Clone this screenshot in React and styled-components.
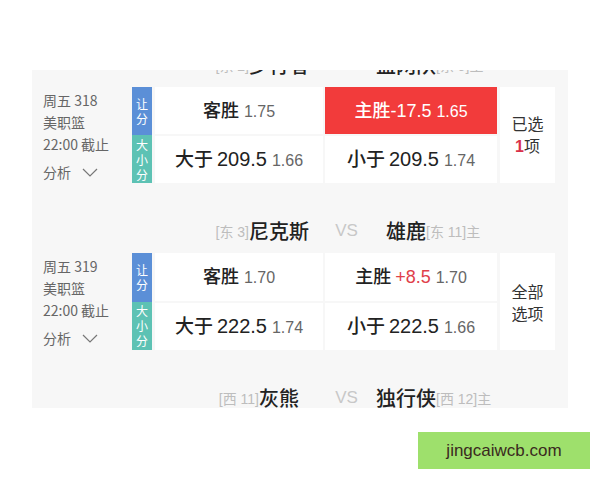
import React from "react";
import styled, { createGlobalStyle } from "styled-components";

const Global = createGlobalStyle`
  html, body { margin: 0; padding: 0; background: #fff; }
  body { font-family: "Liberation Sans", "Noto Sans CJK SC", sans-serif; }
`;

const Page = styled.div`
  width: 600px;
  height: 480px;
  padding-top: 70px;
  box-sizing: border-box;
  display: flex;
  flex-direction: column;
`;

const Panel = styled.div`
  margin-left: 32px;
  width: 536px;
  height: 338px;
  background: #f7f7f7;
  overflow: hidden;
`;

const Inner = styled.div`
  margin-top: -53px;
  display: flex;
  flex-direction: column;
`;

const Header = styled.div`
  height: 70px;
  box-sizing: border-box;
  padding-top: 26px;
  display: grid;
  grid-template-columns: 212px 70px 57px 70px 1fr;
  align-items: center;
  line-height: 22px;
`;

const Name = styled.div`
  grid-column: ${(p) => p.$col};
  justify-self: center;
  position: relative;
  white-space: nowrap;
  font-size: 20px;
  color: #222;
  font-weight: 500;
  font-family: "Noto Sans CJK SC", sans-serif;
`;

const Rank = styled.span`
  position: absolute;
  top: 1px;
  ${(p) => (p.$right ? "left: 100%;" : "right: 100%;")}
  font-size: 14px;
  font-weight: 400;
  color: #bdbdbd;
  font-family: "Liberation Sans", "Noto Sans CJK SC", sans-serif;
`;

const Vs = styled.div`
  grid-column: 3;
  padding-left: 8px;
  text-align: center;
  font-size: 17px;
  color: #c8c8c8;
  font-family: "Liberation Sans", sans-serif;
`;

const Card = styled.div`
  display: flex;
  padding-left: 11px;
  height: ${(p) => p.$h}px;
`;

const Info = styled.div`
  width: 89px;
  padding-top: 2px;
  display: flex;
  flex-direction: column;
  font-size: 14px;
  line-height: 22px;
  color: #666;
  font-family: "Noto Sans CJK SC", sans-serif;
`;

const Analyze = styled.div`
  margin-top: 6px;
  display: flex;
  align-items: center;
  gap: 11px;
`;

const Tags = styled.div`
  width: 20px;
  display: grid;
  grid-template-rows: 1fr 1fr;
`;

const Tag = styled.div`
  background: ${(p) => p.$color};
  color: #fff;
  font-size: 12px;
  line-height: 15px;
  display: flex;
  flex-direction: column;
  align-items: center;
  justify-content: center;
  font-family: "Noto Sans CJK SC", sans-serif;
`;

const Odds = styled.div`
  margin-left: 3px;
  width: 342px;
  display: grid;
  grid-template-columns: 168px 172px;
  grid-template-rows: 1fr 1fr;
  gap: 2px;
`;

const Cell = styled.div`
  background: ${(p) => (p.$active ? "#f23b3b" : "#fff")};
  color: ${(p) => (p.$active ? "#fff" : "#222")};
  display: flex;
  align-items: baseline;
  justify-content: center;
  padding-top: 11px;
  box-sizing: border-box;
  white-space: nowrap;
`;

const Label = styled.span`
  font-family: "Noto Sans CJK SC", sans-serif;
  font-size: ${(p) => (p.$big ? 19 : 18)}px;
  font-weight: 500;
  line-height: 22px;
`;

const Line = styled.span`
  font-size: ${(p) => (p.$big ? 20 : 18)}px;
  color: ${(p) => p.$color || "inherit"};
  margin-left: ${(p) => (p.$gap ? 4 : 0)}px;
`;

const Price = styled.span`
  font-size: 16px;
  margin-left: 5px;
  color: ${(p) => (p.$active ? "#fff" : "#666")};
`;

const Side2 = styled.div`
  margin-left: 3px;
  width: 55px;
  background: #fff;
  display: flex;
  flex-direction: column;
  align-items: center;
  justify-content: center;
  font-size: 16px;
  line-height: 22px;
  color: #333;
  font-family: "Noto Sans CJK SC", sans-serif;
`;

const Red = styled.span`
  color: #d9304a;
  font-family: "Liberation Sans", sans-serif;
  font-weight: bold;
`;

const Mark = styled.div`
  margin-top: 24px;
  margin-left: 418px;
  width: 172px;
  height: 37px;
  background: #9ee06c;
  display: flex;
  align-items: center;
  justify-content: center;
  font-size: 17px;
  color: #3a2a20;
  font-family: "Liberation Sans", sans-serif;
`;

const Chevron = () => (
  <svg width="16" height="9" viewBox="0 0 16 9">
    <polyline points="1,1 8,8 15,1" fill="none" stroke="#777" strokeWidth="1.2" />
  </svg>
);

function MatchHeader({ lr, l, r, rr }) {
  return (
    <Header>
      <Name $col={2}>
        <Rank>{lr}</Rank>
        {l}
      </Name>
      <Vs>VS</Vs>
      <Name $col={4}>
        {r}
        <Rank $right>{rr}</Rank>
      </Name>
    </Header>
  );
}

function MatchCard({ h, no, away, home, homeLine, homeColor, homeActive, total, over, under, side }) {
  return (
    <Card $h={h}>
      <Info>
        <div>周五 {no}</div>
        <div>美职篮</div>
        <div>22:00 截止</div>
        <Analyze>
          分析 <Chevron />
        </Analyze>
      </Info>
      <Tags>
        <Tag $color="#5b8fd7">
          <span>让</span>
          <span>分</span>
        </Tag>
        <Tag $color="#5dc2b4">
          <span>大</span>
          <span>小</span>
          <span>分</span>
        </Tag>
      </Tags>
      <Odds>
        <Cell>
          <Label>客胜</Label>
          <Price>{away}</Price>
        </Cell>
        <Cell $active={homeActive}>
          <Label>主胜</Label>
          <Line $color={homeColor} $gap={!homeActive}>{homeLine}</Line>
          <Price $active={homeActive}>{home}</Price>
        </Cell>
        <Cell $big>
          <Label $big>大于</Label>
          <Line $big $gap>{total}</Line>
          <Price>{over}</Price>
        </Cell>
        <Cell $big>
          <Label $big>小于</Label>
          <Line $big $gap>{total}</Line>
          <Price>{under}</Price>
        </Cell>
      </Odds>
      <Side2>{side}</Side2>
    </Card>
  );
}

export default function App() {
  return (
    <>
      <Global />
      <Page>
        <Panel>
          <Inner>
            <MatchHeader lr="[东 2]" l="步行者" r="篮网队" rr="[东 9]主" />
            <MatchCard
              h={96}
              no="318"
              away="1.75"
              home="1.65"
              homeLine="-17.5"
              homeActive
              total="209.5"
              over="1.66"
              under="1.74"
              side={
                <>
                  <div>已选</div>
                  <div>
                    <Red>1</Red>项
                  </div>
                </>
              }
            />
            <MatchHeader lr="[东 3]" l="尼克斯" r="雄鹿" rr="[东 11]主" />
            <MatchCard
              h={97}
              no="319"
              away="1.70"
              home="1.70"
              homeLine="+8.5"
              homeColor="#e0404a"
              total="222.5"
              over="1.74"
              under="1.66"
              side={
                <>
                  <div>全部</div>
                  <div>选项</div>
                </>
              }
            />
            <MatchHeader lr="[西 11]" l="灰熊" r="独行侠" rr="[西 12]主" />
          </Inner>
        </Panel>
        <Mark>jingcaiwcb.com</Mark>
      </Page>
    </>
  );
}
